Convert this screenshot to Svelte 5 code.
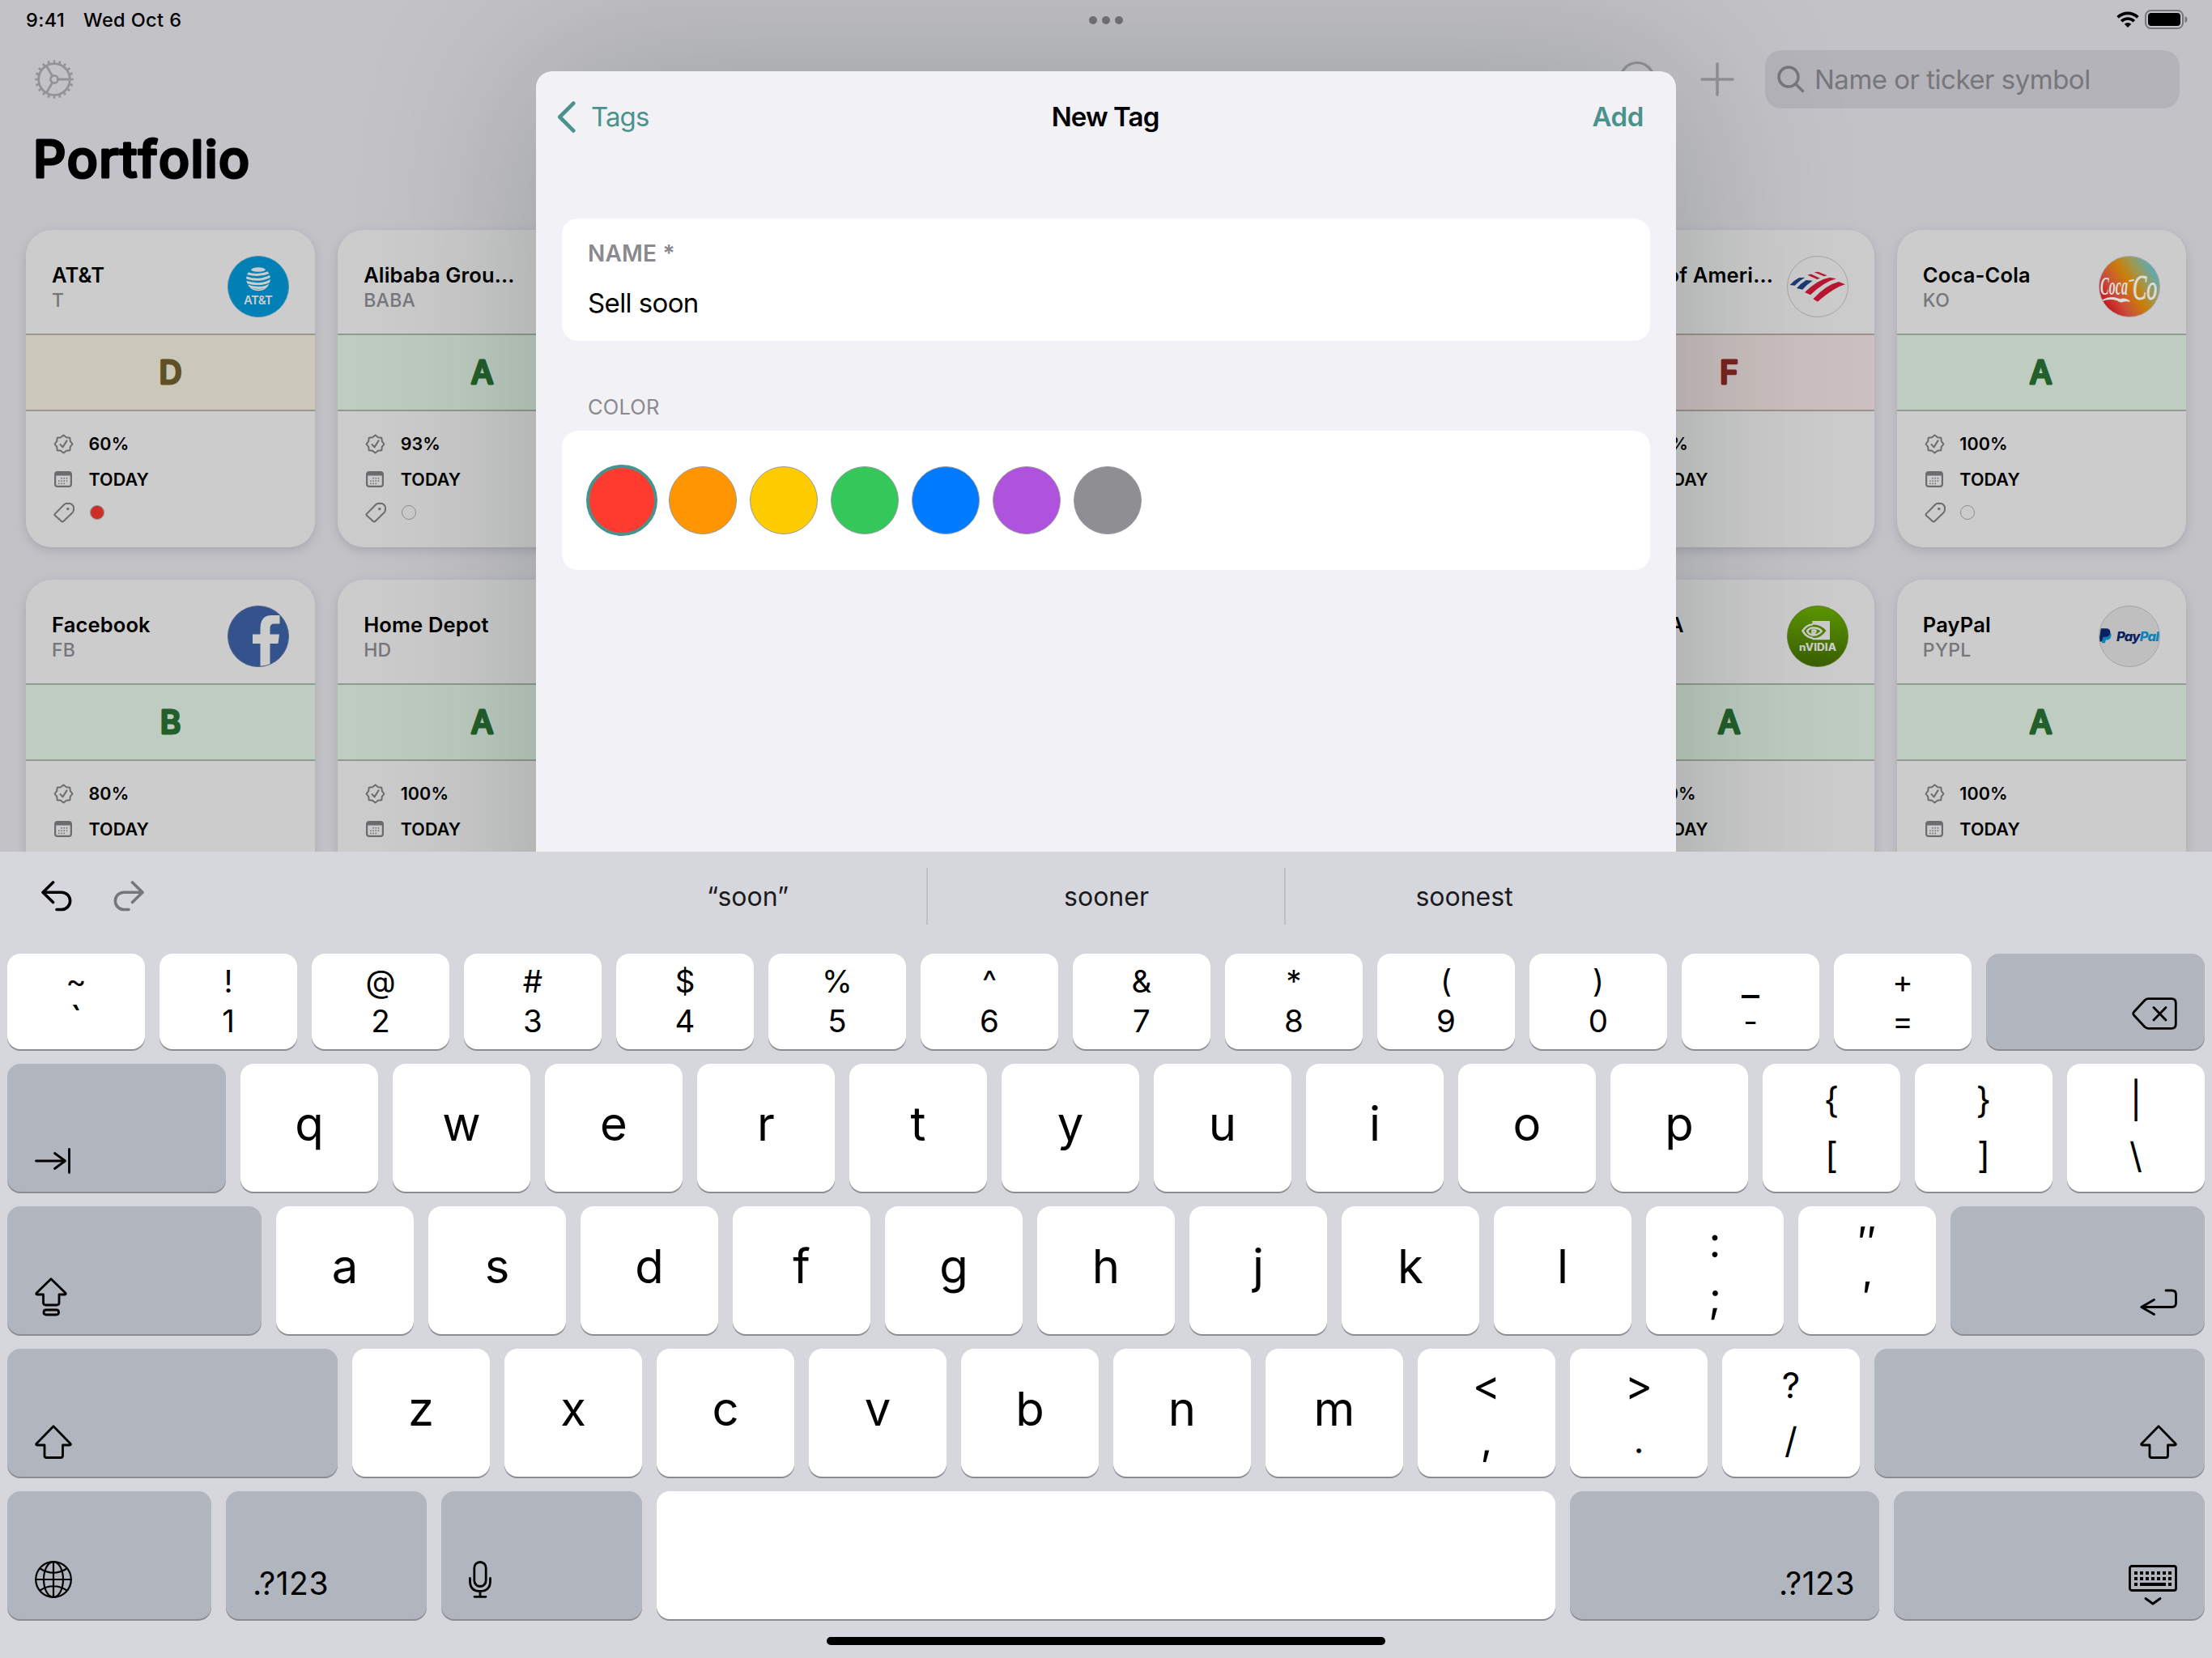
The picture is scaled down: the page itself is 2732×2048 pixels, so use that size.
<script>
  const cards = [
    { col: 1, row: 1, name: 'AT&T', ticker: 'T', grade: 'D', score: '60%', logo: 'att', tagged: true },
    { col: 2, row: 1, name: 'Alibaba Grou...', ticker: 'BABA', grade: 'A', score: '93%' },
    { col: 6, row: 1, name: 'Bank of Ameri...', ticker: 'BAC', grade: 'F', score: '60%', logo: 'bac' },
    { col: 7, row: 1, name: 'Coca-Cola', ticker: 'KO', grade: 'A', score: '100%', logo: 'ko' },
    { col: 1, row: 2, name: 'Facebook', ticker: 'FB', grade: 'B', score: '80%', logo: 'fb' },
    { col: 2, row: 2, name: 'Home Depot', ticker: 'HD', grade: 'A', score: '100%' },
    { col: 6, row: 2, name: 'NVIDIA', ticker: 'NVDA', grade: 'A', score: '100%', logo: 'nvda' },
    { col: 7, row: 2, name: 'PayPal', ticker: 'PYPL', grade: 'A', score: '100%', logo: 'pypl' },
  ];

  const colors = ['red', 'orange', 'yellow', 'green', 'blue', 'purple', 'gray'];
  const suggestions = ['“soon”', 'sooner', 'soonest'];

  const letters = (text) => text.split('').map((label) => ({ label }));
  const pairs = (list) => list.map(([top, bottom]) => ({ top, bottom }));

  const rows = [
    {
      kind: 'numbers',
      keys: [
        ...pairs([['~', '`'], ['!', '1'], ['@', '2'], ['#', '3'], ['$', '4'], ['%', '5'], ['^', '6'],
          ['&', '7'], ['*', '8'], ['(', '9'], [')', '0'], ['_', '-'], ['+', '=']]),
        { icon: 'backspace', size: 'w270', side: 'right' },
      ],
    },
    {
      kind: 'tall',
      keys: [
        { icon: 'tab', size: 'w270', side: 'left' },
        ...letters('qwertyuiop'),
        ...pairs([['{', '['], ['}', ']'], ['|', '\\']]),
      ],
    },
    {
      kind: 'tall',
      keys: [
        { icon: 'caps', size: 'w314', side: 'left' },
        ...letters('asdfghjkl'),
        ...pairs([[':', ';'], ['″', '′']]),
        { icon: 'return', size: 'w314', side: 'right' },
      ],
    },
    {
      kind: 'tall',
      keys: [
        { icon: 'shift', size: 'w408', side: 'left' },
        ...letters('zxcvbnm'),
        ...pairs([['<', ','], ['>', '.'], ['?', '/']]),
        { icon: 'shift', size: 'w408', side: 'right' },
      ],
    },
    {
      kind: 'tall',
      keys: [
        { icon: 'globe', size: 'w252', side: 'left' },
        { text: '.?123', size: 'w248', side: 'left' },
        { icon: 'mic', size: 'w248', side: 'left' },
        { label: '', size: 'w1110' },
        { text: '.?123', size: 'w382', side: 'right' },
        { icon: 'dismiss', size: 'w384', side: 'right' },
      ],
    },
  ];

  // Symbols drawn larger than the rest of their row.
  const large = ['`', '_', '″', '′', ':', ';', '<', '>', ','];

  // Eight-lobed seal outline, alternating crests and valleys.
  const seal = Array.from({ length: 16 }, (_, i) => {
    const a = (i * Math.PI) / 8;
    const r = i % 2 ? 9 : 11;
    return `${(12.5 + r * Math.sin(a)).toFixed(2)},${(12.5 - r * Math.cos(a)).toFixed(2)}`;
  }).join(' ');

  const calendarDots = [[9, 9.5], [12.2, 9.5], [15.4, 9.5], [5.8, 12.8], [9, 12.8], [12.2, 12.8], [15.4, 12.8], [5.8, 16.1], [9, 16.1], [12.2, 16.1]];
  const keyDots = [8, 15, 22, 29, 36, 43, 50];
</script>

<div class="screen">
  <main class="portfolio">
    <div class="status">
      <span class="time">9:41</span>
      <span class="date">Wed Oct 6</span>
      <svg class="dots" viewBox="0 0 44 12"><circle cx="6" cy="6" r="5" /><circle cx="22" cy="6" r="5" /><circle cx="38" cy="6" r="5" /></svg>
      <svg class="wifi" viewBox="0 0 28 20">
        <path d="M1.6 7.4a17.8 17.8 0 0 1 24.8 0M6.2 12.2a11.2 11.2 0 0 1 15.6 0" />
        <path class="solid" d="M9.8 15.7a6.2 6.2 0 0 1 8.4 0L14 20Z" />
      </svg>
      <svg class="battery" viewBox="0 0 54 24">
        <rect class="shell" x="1" y="1" width="46" height="22" rx="6.5" />
        <rect x="4" y="4" width="40" height="16" rx="4" />
        <path class="nub" d="M49.5 8q3 1 3 4t-3 4Z" />
      </svg>
    </div>

    <div class="toolbar">
      <svg class="gear" viewBox="0 0 48 48">
        <circle class="teeth" cx="24" cy="24" r="22" pathLength="200" />
        <circle cx="24" cy="24" r="19.3" />
        <circle cx="24" cy="24" r="4.6" />
        <path d="M28.6 24H43M21.7 20 14.4 7.4M21.7 28 14.4 40.6" />
      </svg>
      <div class="actions">
        <svg class="round" viewBox="0 0 46 46"><circle cx="23" cy="23" r="20.5" /></svg>
        <svg class="plus" viewBox="0 0 42 42"><path d="M21 2v38M2 21h38" /></svg>
        <div class="search">
          <svg viewBox="0 0 34 34"><circle cx="14" cy="14" r="12" /><path d="M23 23l8.5 8.5" /></svg>
          <span>Name or ticker symbol</span>
        </div>
      </div>
    </div>

    <svg class="title" viewBox="0 0 300 90"><text x="1" y="63" textLength="267">Portfolio</text></svg>

    <div class="cards">
      {#each cards as card}
        <article class="card c{card.col} r{card.row}">
          <header>
            <div class="names">
              <div class="name">{card.name}</div>
              <div class="ticker">{card.ticker}</div>
            </div>
            {#if card.logo}
              <div class="logo {card.logo}">
                <svg viewBox="0 0 76 76">
                  {#if card.logo === 'att'}
                    <clipPath id="globe"><circle cx="38" cy="28.5" r="14.8" /></clipPath>
                    <g clip-path="url(#globe)">
                      <ellipse class="lite" cx="38" cy="17" rx="9" ry="2.8" />
                      <path class="stripes" d="M24 21.5Q38 26 51 20.5M22 26.5Q40 33 54 24.5M22 32Q42 38.5 55 29.5M24 37Q42 43 54 35M28 41.5Q40 45 50 40" />
                    </g>
                    <text class="lite att-name" x="38" y="60" text-anchor="middle" textLength="36">AT&amp;T</text>
                  {:else if card.logo === 'bac'}
                    <path class="navy" d="M3.7 36Q9 30 15 27l7.3-.3Q15 31 9.7 36.7ZM12 40q5-6 11.7-10l8 .7Q25 35 19.3 41.7Z" />
                    <path class="crimson" d="M25.3 23.7l4.4-1.2L41 27.7l-3.7 1.2ZM33.7 20.3l4.6-.6 11.4 4.6-4 1ZM22 45Q38 29.3 53 26.7l8 1.6Q46 32 29 48.3ZM32.3 53.3Q48 36 64 32l8 3.3Q58 39.3 38 56.7Z" />
                  {:else if card.logo === 'ko'}
                    <text class="script" x="2" y="48" textLength="34" lengthAdjust="spacingAndGlyphs">Coca</text>
                    <path class="ribbon" d="M38 31l5-1" />
                    <text class="script big" x="42" y="54" textLength="30" lengthAdjust="spacingAndGlyphs">Co</text>
                    <path class="swash" d="M5 55Q14 50 23 53q3 1.500 6 .5 4-1 9 2.500-4-1-9 .5-3 1-6-2Q13 52 5 55Z" />
                  {:else if card.logo === 'fb'}
                    <path class="letter" d="M40.500 76V47H31V35.500h9.500V28Q40.500 12 54.500 12H64.500V22.500H57.500Q52.500 22.500 52.500 28v7.500H64L62.500 47H52.500V76Z" />
                  {:else if card.logo === 'nvda'}
                    <path class="lite" d="M31.300 19H53v23.300H31.300Z" />
                    <path class="eye" d="M19.500 31.300Q25 23.500 32.500 23.500 42 23.500 48.500 31 42 40 34 40 25 40 19.500 31.300Z" />
                    <path class="eye-light" d="M31 23.500Q24 24 19.500 31.300 24 39 31 40" />
                    <path class="eye-light" d="M31.500 27.500Q39 27 43 31.500 38 37 32.500 36.500 27 36 25 31.500 28 27.500 31.500 27.500M31.500 36Q37 32 35 30.500L31.500 30.500V33.500" />
                    <text class="lite nv-name" x="38" y="55.500" text-anchor="middle" textLength="46" lengthAdjust="spacingAndGlyphs">nVIDIA</text>
                  {:else}
                    <path class="pp-sky" d="M6 32h6q4 1 3.500 5.500-.8 5-6 5H8.800L8 46.300H4Z" />
                    <path class="pp-navy" d="M2.800 28.300H10q5 .7 4.300 5.500-.8 5-6.300 5H5.500L4.200 44.500H.3Z" />
                    <text class="pp-text" x="22" y="44" textLength="53"><tspan class="pp-navy">Pay</tspan><tspan class="pp-sky">Pal</tspan></text>
                  {/if}
                </svg>
              </div>
            {/if}
          </header>
          <div class="grade g{card.grade}">
            <svg viewBox="0 0 60 60"><text x="29.5" y="43.700" text-anchor="middle">{card.grade}</text></svg>
          </div>
          <ul>
            <li>
              <svg class="seal" viewBox="0 0 25 25"><polygon points={seal} /><path d="M8.500 13l3 3.400 5-8" /></svg>
              <span>{card.score}</span>
            </li>
            <li>
              <svg class="calendar" viewBox="0 0 22 20">
                <rect class="frame" x="1.100" y="1.100" width="19.800" height="17.800" rx="3" />
                <path d="M1 5.500V4q0-3 3-3h14q3 0 3 3v1.500Z" />
                {#each calendarDots as [x, y]}<rect {x} {y} width="1.500" height="1.500" transform="translate(-.7 -1.500)" />{/each}
              </svg>
              <span>TODAY</span>
            </li>
            <li>
              <svg class="tag" viewBox="0 0 26 26">
                <path d="M2 14.600 13.200 3.200Q14.700 1.800 16.600 1.800L20.300 2Q21.900 2.100 23 3.300L24 4.500Q25 5.600 25 7L24.900 10.200Q24.800 12 23.400 13.300L12.600 23.700Q11.100 25 9.700 23.700L2 16.800Q1 15.700 2 14.600Z" />
                <circle cx="17.800" cy="8.600" r="1.700" />
              </svg>
              <i class="marker" class:tagged={card.tagged}></i>
            </li>
          </ul>
        </article>
      {/each}
    </div>

    <section class="sheet">
      <nav>
        <button class="back">
          <svg viewBox="0 0 22 38"><path d="M19.500 2.500 3 19l16.500 16.500" /></svg>
          <span>Tags</span>
        </button>
        <h2>New Tag</h2>
        <button class="add">Add</button>
      </nav>
      <div class="panel field">
        <label for="tag-name">NAME *</label>
        <div id="tag-name" class="value">Sell soon</div>
      </div>
      <h3>COLOR</h3>
      <div class="panel swatches">
        {#each colors as color, i}
          <span class="swatch {color}" class:selected={i === 0}></span>
        {/each}
      </div>
    </section>
  </main>

  <section class="keyboard">
    <div class="assist">
      <svg class="undo" viewBox="0 0 38 38"><path d="M14.500 2 2 14.200 14.500 26.500M2 14.200H25a10.600 10.600 0 0 1 0 21.300H19" /></svg>
      <svg class="redo" viewBox="0 0 38 38"><path d="M23.500 2 36 14.200 23.500 26.500M36 14.200H13a10.600 10.600 0 0 0 0 21.300h6" /></svg>
      <div class="suggestions">
        {#each suggestions as word}<span>{word}</span>{/each}
      </div>
    </div>

    <div class="keys">
      {#each rows as row}
        <div class="row {row.kind}">
          {#each row.keys as key}
            {#if key.top}
              <div class="key pair">
                <span class:large={large.includes(key.top)}>{key.top}</span>
                <span class:large={large.includes(key.bottom)}>{key.bottom}</span>
              </div>
            {:else if key.text}
              <div class="key dark {key.size} {key.side} mode">{key.text}</div>
            {:else if key.icon}
              <div class="key dark {key.size} {key.side} {key.icon}">
                {#if key.icon === 'backspace'}
                  <svg width="56" height="40" viewBox="0 0 56 40"><path d="M20.500 1.700H49q5.300 0 5.300 5.300v26q0 5.300-5.300 5.300H20.500Q18 38.300 16 36.500L2.500 22Q1 20 2.500 18L16 3.500Q18 1.700 20.500 1.700ZM27 12.500 42 28M42 12.500 27 28" /></svg>
                {:else if key.icon === 'tab'}
                  <svg width="44" height="32" viewBox="0 0 44 32"><path d="M1.500 16H37M24.500 6.500 37.500 16 24.500 25.500M42.500 1.500v29" /></svg>
                {:else if key.icon === 'caps'}
                  <svg width="40" height="48" viewBox="0 0 40 48"><path d="M20 1.700 38 19.300q.8 1.500-1 1.700H30v10q0 3-3 3H13.500q-3 0-3-3V21H3q-1.800-.2-1-1.700ZM14 40h12.500q3 0 3 3t-3 3H14q-3 0-3-3t3-3Z" /></svg>
                {:else if key.icon === 'return'}
                  <svg width="46" height="34" viewBox="0 0 46 34"><path d="M32 2h7.500q5 0 5 5v10.500q0 5-5 5H2M17.500 13.500 1.800 22.500l15.700 9" /></svg>
                {:else if key.icon === 'shift'}
                  <svg width="46" height="42" viewBox="0 0 46 42"><path d="M23 1.700 44 23.300q1 1.700-1 1.700H34.500v13q0 2.500-2.500 2.500H14.500q-2.500 0-2.500-2.500V25H3q-2 0-1-1.700Z" /></svg>
                {:else if key.icon === 'globe'}
                  <svg class="thin" width="46" height="46" viewBox="0 0 46 46"><circle cx="23" cy="23" r="21.800" /><ellipse cx="23" cy="23" rx="12" ry="21.800" /><path d="M23 1v44M1 23h44M6.500 9.500Q23 20 39.500 9.500M6.500 36.500Q23 26 39.500 36.500" /></svg>
                {:else if key.icon === 'mic'}
                  <svg width="28" height="46" viewBox="0 0 28 46"><rect x="6.800" y="1.500" width="14.400" height="30" rx="7.200" /><path d="M1.500 21.500V25q0 12.500 12.500 12.500T26.500 25v-3.500M14 37.500V44M7 44.300h14" /></svg>
                {:else}
                  <svg width="60" height="50" viewBox="0 0 60 50">
                    <rect x="1.500" y="1.500" width="57" height="30" rx="2.500" />
                    <g class="solid">
                      {#each keyDots as x}
                        <rect {x} y="8" width="4" height="4" transform="translate(-1 0)" />
                        <rect {x} y="15" width="4" height="4" transform="translate(-1 0)" />
                      {/each}
                      <rect x="7" y="22" width="4" height="4" /><rect x="14" y="22" width="32" height="4" /><rect x="49" y="22" width="4" height="4" />
                    </g>
                    <path d="M21 41.500l9 6.500 9-6.500" />
                  </svg>
                {/if}
              </div>
            {:else}
              <div class="key letter-key {key.size ?? ''}">{key.label}</div>
            {/if}
          {/each}
        </div>
      {/each}
    </div>
    <div class="home"></div>
  </section>
</div>

<style>
  :global(body) { margin: 0; }
  .screen, .screen * { box-sizing: border-box; }
  .screen {
    width: 2732px;
    height: 2048px;
    display: flex;
    flex-direction: column;
    overflow: hidden;
    font-family: Inter, 'Liberation Sans', sans-serif;
    color: #000;
  }
  svg { display: block; flex: none; fill: none; stroke-linecap: round; stroke-linejoin: round; }

  .portfolio { position: relative; height: 1052px; background: #c3c2c7; overflow: hidden; display: flex; flex-direction: column; flex: none; }

  .status { height: 48px; flex: none; display: grid; grid-template-columns: auto auto 1fr auto auto; align-items: center; padding: 0 30px 0 32px; font-size: 23.500px; font-weight: 500; letter-spacing: .4px; }
  .date { margin-left: 23px; }
  .dots { width: 44px; height: 12px; fill: #737576; position: absolute; left: 1344px; top: 19px; }
  .wifi { width: 28px; height: 20px; grid-column: 4; stroke: #000; stroke-width: 3.600px; stroke-linecap: butt; margin-right: 7px; }
  .wifi .solid { fill: #000; stroke: none; }
  .battery { width: 54px; height: 24px; fill: #000; grid-column: 5; margin-right: -1px; }
  .battery .shell { fill: none; stroke: #77777b; stroke-width: 2px; }
  .battery .nub { fill: #77777b; }

  .toolbar { height: 100px; flex: none; display: flex; align-items: center; justify-content: space-between; padding: 0 40px 0 43px; }
  .gear { width: 48px; height: 48px; stroke: #939395; stroke-width: 2.800px; }
  .gear .teeth { stroke-width: 3.500px; stroke-dasharray: 3.800 6.200; stroke-dashoffset: 1.900; stroke-linecap: butt; }
  .actions { display: flex; align-items: center; }
  .round { width: 46px; height: 46px; stroke: #939395; stroke-width: 3.200px; margin-right: 55px; }
  .plus { width: 42px; height: 42px; stroke: #939395; stroke-width: 3.600px; margin-right: 38px; }
  .search { width: 512px; height: 72px; border-radius: 20px; background: rgba(90, 90, 100, .14); display: flex; align-items: center; padding-left: 15px; gap: 12px; color: #77777b; font-size: 33px; letter-spacing: -.5px; }
  .search svg { width: 34px; height: 34px; stroke: #77777b; stroke-width: 3.400px; }

  .title { width: 300px; height: 90px; margin: 8px 0 38px 40px; }
  .title text { font-size: 63px; font-weight: 550; font-variant-ligatures: none; font-kerning: none; fill: #000; stroke: #000; stroke-width: 3.200px; }

  .cards { flex: none; display: grid; grid-template-columns: repeat(7, 1fr); grid-auto-rows: 392px; gap: 40px 28px; padding: 0 32px; }
  .card { border-radius: 32px; background: #ccc; box-shadow: 0 4px 12px rgba(60, 65, 70, .2); }
  .c1 { grid-column: 1; } .c2 { grid-column: 2; } .c6 { grid-column: 6; } .c7 { grid-column: 7; }
  .r1 { grid-row: 1; } .r2 { grid-row: 2; }
  header { height: 128px; padding: 32px 32px 0; display: flex; justify-content: space-between; }
  .names { padding-top: 8px; white-space: nowrap; width: 0; }
  .name { font-size: 25.500px; line-height: 32px; font-weight: 600; letter-spacing: .15px; }
  .ticker { font-size: 23px; line-height: 30px; font-weight: 550; letter-spacing: .3px; color: #77777b; }
  .logo { width: 76px; height: 76px; border-radius: 50%; overflow: hidden; flex: none; border: 1px solid #a5a5a8; }
  .logo svg { width: 76px; height: 76px; margin: -1px; }
  .lite { fill: #ccc; }
  .att { background: #0080b5; border-color: #3f8fb3; }
  .stripes { stroke: #ccc; stroke-width: 3px; }
  .att-name { font-size: 15px; font-weight: 600; }
  .bac { background: #ccc; }
  .navy { fill: #1c3a74; }
  .crimson { fill: #b81733; }
  .ko { background: linear-gradient(58deg, #c8131b 12%, #c9503a 32%, #cb7d08 52%, #a09850 68%, #62aaa8 84%); }
  .script { font-family: 'Liberation Serif', serif; font-style: italic; font-weight: 700; font-size: 32px; fill: #ddd; }
  .script.big { font-size: 44px; font-weight: 400; stroke: #ddd; stroke-width: 1px; }
  .ribbon { stroke: #ddd; stroke-width: 2px; }
  .swash { fill: #ddd; stroke: #ddd; stroke-width: 1.500px; }
  .fb { background: #34528c; border-color: #51658c; }
  .letter { fill: #ccc; }
  .nvda { background: linear-gradient(#5c9600, #3a5f00); border-color: #5b7c2c; }
  .eye { fill: #4d7e00; }
  .eye-light { stroke: #ccc; stroke-width: 2.600px; }
  .nv-name { font-size: 12.500px; font-weight: 800; }
  .pypl { background: #bfbfc0; }
  .pp-navy { fill: #0b2262; }
  .pp-sky { fill: #0d82b8; }
  .pp-text { font-size: 16.500px; font-weight: 800; font-style: italic; }

  .grade { height: 96px; border: solid rgba(0, 0, 0, .24); border-width: 2px 0; display: flex; align-items: center; justify-content: center; }
  .grade svg { width: 60px; height: 60px; }
  .grade text { font-size: 39px; font-weight: 500; stroke-width: 2.900px; }
  .gA, .gB { background: #bfccc2; }
  .gA text, .gB text { fill: #235f2b; stroke: #235f2b; }
  .gD { background: #cbc8ba; }
  .gD text { fill: #5f5126; stroke: #5f5126; }
  .gF { background: #cbc0bf; }
  .gF text { fill: #7c241d; stroke: #7c241d; }

  ul { list-style: none; margin: 0; padding: 18px 34px 0; display: flex; flex-direction: column; }
  li { display: grid; grid-template-columns: 43.500px auto; align-items: center; height: 44px; font-size: 21.500px; font-weight: 600; letter-spacing: .1px; }
  li:last-child { height: 38px; }
  .seal { width: 25px; height: 25px; stroke: #6c6c70; stroke-width: 2px; }
  .calendar { width: 22px; height: 20px; margin-left: 1px; fill: #6c6c70; }
  .calendar .frame { fill: none; stroke: #6c6c70; stroke-width: 2.200px; }
  .tag { width: 26px; height: 26px; stroke: #6c6c70; stroke-width: 2px; }
  .tag circle { fill: #6c6c70; stroke: none; }
  .marker { width: 18px; height: 18px; border: 1.500px solid #8e8e92; border-radius: 50%; margin-left: 1px; }
  .marker.tagged { background: #cf2e26; }

  .sheet { position: absolute; left: 662px; top: 88px; width: 1408px; height: 1200px; border-radius: 20px; background: #f2f1f6; box-shadow: 0 0 220px rgba(8, 28, 20, .22); padding: 0 32px; }
  nav { height: 112px; display: grid; grid-template-columns: 1fr auto 1fr; align-items: center; font-size: 33px; margin: 0 8px 0 -6px; }
  button { font: inherit; color: #4a938c; background: none; border: 0; padding: 0; }
  .back { display: flex; align-items: center; gap: 19px; letter-spacing: -.9px; }
  .back svg { width: 23px; height: 39px; stroke: #4a938c; stroke-width: 4.600px; }
  h2 { margin: 0 -12px 0 0; font-size: 33px; font-weight: 600; letter-spacing: -.9px; }
  .add { justify-self: end; font-weight: 600; letter-spacing: -.4px; }
  .panel { background: #fff; border-radius: 20px; }
  .field { margin-top: 70px; height: 151px; padding: 23px 32px 0; }
  label { display: block; font-size: 28px; line-height: 40px; font-weight: 600; letter-spacing: .2px; color: #8a8a8e; }
  .value { font-size: 33px; line-height: 40px; margin-top: 21px; letter-spacing: -.6px; }
  h3 { margin: 61px 0 9px 32px; font-size: 25.500px; line-height: 41px; font-weight: 400; letter-spacing: .15px; color: #8a8a8e; }
  .swatches { height: 172px; display: flex; align-items: center; gap: 16px; padding-left: 32px; }
  .swatch { width: 84px; height: 84px; border-radius: 50%; border: 1.500px solid #98989c; }
  .swatch.selected { width: 88px; height: 88px; margin: 0 -2px; border: 4px solid #4a938c; }
  .red { background: #ff3b30; } .orange { background: #ff9500; } .yellow { background: #fc0; }
  .green { background: #34c759; } .blue { background: #007aff; } .purple { background: #af52de; } .gray { background: #8e8e93; }

  .keyboard { flex: 1; background: #d6d7dc; display: flex; flex-direction: column; }
  .assist { height: 126px; display: flex; padding: 0 0 17px 51px; align-items: center; }
  .undo, .redo { width: 38px; height: 38px; stroke: #000; stroke-width: 3.600px; }
  .redo { margin-left: 51px; stroke: #757679; }
  .suggestions { display: flex; margin-left: 524px; font-size: 32px; color: #1b1b1d; }
  .suggestions span { width: 442px; height: 70px; display: flex; align-items: center; justify-content: center; padding: 2px 0 0 1px; }
  .suggestions span + span { border-left: 2px solid #bfc0c5; }

  .keys { display: flex; flex-direction: column; gap: 18px; padding: 0 9px; }
  .row { display: flex; gap: 18px; }
  .numbers { height: 118px; }
  .tall { height: 158px; }
  .key { width: 170px; flex: none; background: #fff; border-radius: 16px; box-shadow: 0 2px 0 #8a8c90; display: flex; }
  .dark { background: #b0b5be; align-items: flex-end; padding: 0 34px 22px; }
  .right { justify-content: flex-end; }
  .key svg { stroke: #000; stroke-width: 2.800px; }
  .key svg.thin { stroke-width: 2.200px; }
  .key .solid { fill: #000; stroke: none; }
  .backspace { padding-bottom: 24px; }
  .globe, .mic { padding-bottom: 26px; }
  .dismiss { padding-bottom: 17px; }
  .mode { font-size: 39px; line-height: 46px; padding: 0 30px 21px 33px; letter-spacing: .5px; }
  .letter-key { align-items: center; justify-content: center; font-size: 58px; padding-bottom: 11px; }
  .pair { flex-direction: column; align-items: center; }
  .numbers .pair { font-size: 38.500px; line-height: 48.500px; padding-top: 10px; }
  .tall .pair { font-size: 44px; line-height: 68px; padding-top: 11px; }
  .numbers .large { font-size: 48px; }
  .tall .large { font-size: 52px; }
  .w248 { width: 248px; } .w252 { width: 252px; } .w270 { width: 270px; } .w314 { width: 314px; }
  .w382 { width: 382px; } .w384 { width: 384px; } .w408 { width: 408px; } .w1110 { width: 1110px; }
  .home { width: 690px; height: 10px; border-radius: 5px; background: #000; margin: 22px auto 0; }
</style>
